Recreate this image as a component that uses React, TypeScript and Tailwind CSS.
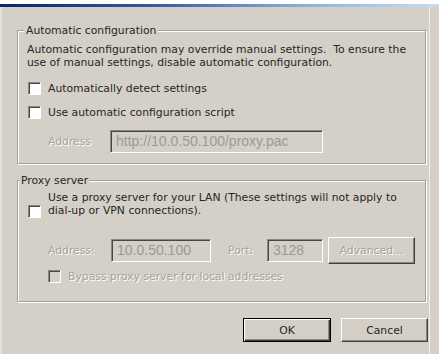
import React from "react";

const sunken =
	"border-t border-l border-t-[#8a8781] border-l-[#8a8781] border-b border-r border-b-white border-r-white shadow-[inset_1px_1px_0_#4a4843]";

const raised =
	"border border-t-white border-l-white border-b-[#404040] border-r-[#404040] shadow-[inset_-1px_-1px_0_#8a8781]";

const disabledText = "text-[#a5a29c] [text-shadow:1px_1px_0_#ffffff]";

const groupBox =
	"ml-[15px] w-[409px] border border-[#a3a099] pl-[9px] shadow-[inset_1px_1px_0_#ffffff,1px_1px_0_#ffffff]";

const Checkbox = ({ disabled = false, className = "" }: { disabled?: boolean; className?: string }) => (
	<span
		className={`block h-[13px] w-[13px] shrink-0 ${sunken} ${disabled ? "bg-[#d4d0c8]" : "bg-white"} ${className}`}
	/>
);

const Field = ({ value, className = "" }: { value: string; className?: string }) => (
	<div
		className={`flex h-[23px] items-center bg-[#d4d0c8] pl-[5px] font-['Liberation_Sans',sans-serif] text-[14px] text-[#9c9993] ${sunken} ${className}`}
	>
		{value}
	</div>
);

export default function App() {
	return (
		<div className="flex h-[354px] w-[439px] flex-col overflow-hidden bg-[#d4d0c8] font-['DejaVu_Sans',sans-serif] text-[10.8px] leading-[13px] text-[#262626]">
			{/* title bar remains */}
			<div className="h-[4px] bg-white" />
			<div className="h-[3px] bg-[linear-gradient(to_right,#0c2468,#3a5a9c_35%,#8fb0de_70%,#c9dcf2)]" />

			<div className="flex flex-1 border-l-2 border-[#e4e2dd]">
				<div className="w-[428px] border-r border-[#efeeea]">
					{/* Automatic configuration */}
					<fieldset className={`${groupBox} mt-[17px] pb-[10px]`}>
						<legend className="-ml-[3px] bg-[#d4d0c8] px-[2px] leading-[13px]">Automatic configuration</legend>
						<p className="mt-[6px]">
							Automatic configuration may override manual settings.{"\u00a0"} To ensure the
							<br />
							use of manual settings, disable automatic configuration.
						</p>
						<label className="mt-[13px] flex h-[13px] items-center">
							<Checkbox className="ml-[1px]" />
							<span className="ml-[7px]">Automatically detect settings</span>
						</label>
						<label className="mt-[11px] flex h-[13px] items-center">
							<Checkbox className="ml-[1px]" />
							<span className="ml-[7px]">Use automatic configuration script</span>
						</label>
						<div className="mt-[11px] flex items-center">
							<span className={`ml-[21px] w-[62px] ${disabledText}`}>Address</span>
							<Field value="http://10.0.50.100/proxy.pac" className="w-[213px]" />
						</div>
					</fieldset>

					{/* Proxy server */}
					<fieldset className={`${groupBox} mt-[10px] pb-[18px]`}>
						<legend className="-ml-[7px] bg-[#d4d0c8] px-[1px] leading-[13px]">Proxy server</legend>
						<label className="mt-[4px] flex items-start">
							<Checkbox className="ml-[1px] mt-[14px]" />
							<span className="ml-[7px]">
								Use a proxy server for your LAN (These settings will not apply to
								<br />
								dial-up or VPN connections).
							</span>
						</label>
						<div className="mt-[19px] flex h-[27px] items-center">
							<span className={`ml-[21px] w-[63px] ${disabledText}`}>Address:</span>
							<Field value="10.0.50.100" className="w-[100px]" />
							<span className={`ml-[17px] w-[39px] ${disabledText}`}>Port:</span>
							<Field value="3128" className="w-[56px]" />
							<button
								type="button"
								className={`ml-[5px] h-[27px] w-[87px] bg-[#d4d0c8] ${raised} ${disabledText}`}
							>
								Advanced...
							</button>
						</div>
						<label className="mt-[6px] flex h-[13px] items-center">
							<Checkbox disabled className="ml-[21px]" />
							<span className={`ml-[7px] ${disabledText}`}>Bypass proxy server for local addresses</span>
						</label>
					</fieldset>

					{/* dialog buttons */}
					<div className="mt-[16px] flex justify-end gap-[10px] pr-[1px]">
						<button
							type="button"
							className="h-[24px] w-[88px] border border-black bg-[#d4d0c8] shadow-[inset_1px_1px_0_#ffffff,inset_-1px_-1px_0_#404040,inset_-2px_-2px_0_#8a8781]"
						>
							OK
						</button>
						<button type="button" className={`h-[24px] w-[87px] bg-[#d4d0c8] ${raised}`}>
							Cancel
						</button>
					</div>
				</div>
			</div>
		</div>
	);
}
